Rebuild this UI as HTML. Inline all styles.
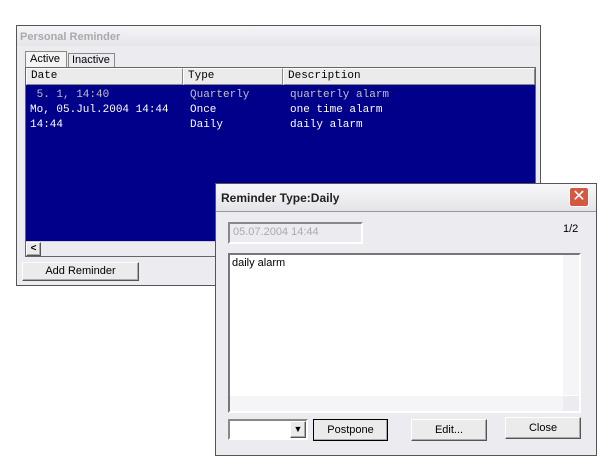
<!DOCTYPE html><html><head><style>
body{margin:0;width:610px;height:471px;background:#fff;position:relative;overflow:hidden;font-family:"Liberation Sans",sans-serif;font-size:11px}
.a{position:absolute;box-sizing:border-box}
.btn{background:#ebebeb;border:1px solid;border-color:#fff #555 #555 #fff;box-shadow:inset -1px -1px #aaa;text-align:center;line-height:18px}
.mono{font-family:"Liberation Mono",monospace;font-size:11px;color:#fff}
.hd{background:#ebebeb;border:1px solid;border-color:#fff #888 #888 #fff;font-family:"Liberation Mono",monospace;padding-left:4px;line-height:15px}
</style></head><body>
<div class="a" style="left:16px;top:25px;width:525px;height:261px;border:1px solid #555;background:#ecebf0"></div>
<div class="a" style="left:17px;top:26px;width:523px;height:20px;background:linear-gradient(#f5f5f8,#e6e6ea)"></div>
<div class="a" style="left:20px;top:31px;color:#aaa;font-weight:bold;font-size:11px">Personal Reminder</div>
<div class="a" style="left:25px;top:51px;width:42px;height:16px;border:1px solid #888;border-bottom:none;background:#f4f4f4;font-size:11px;padding:1px 4px">Active</div>
<div class="a" style="left:68px;top:53px;width:47px;height:14px;border:1px solid #888;border-bottom:none;background:#ecebf0;padding:0 3px">Inactive</div>
<div class="a" style="left:25px;top:67px;width:511px;height:190px;border:1px solid #666;background:#00008b"></div>
<div class="a hd" style="left:26px;top:68px;width:157px;height:17px">Date</div>
<div class="a hd" style="left:183px;top:68px;width:100px;height:17px">Type</div>
<div class="a hd" style="left:283px;top:68px;width:252px;height:17px">Description</div>
<div class="a mono" style="left:30px;top:88px;line-height:15px;color:#c0c0c0">&nbsp;5. 1, 14:40<br><span style="color:#fff">Mo, 05.Jul.2004 14:44<br>14:44</span></div>
<div class="a mono" style="left:190px;top:88px;line-height:15px;color:#c0c0c0">Quarterly<br><span style="color:#fff">Once<br>Daily</span></div>
<div class="a mono" style="left:290px;top:88px;line-height:15px;color:#c0c0c0">quarterly alarm<br><span style="color:#fff">one time alarm<br>daily alarm</span></div>
<div class="a" style="left:26px;top:241px;width:509px;height:15px;background:#ecebf0;border-top:1px solid #ccc"></div>
<div class="a btn" style="left:26px;top:242px;width:15px;height:14px;line-height:12px;font-size:10px;font-weight:bold">&lt;</div>
<div class="a btn" style="left:22px;top:262px;width:117px;height:19px;line-height:17px">Add Reminder</div>

<div class="a" style="left:215px;top:183px;width:382px;height:273px;border:1px solid #555;background:#ecebf0"></div>
<div class="a" style="left:216px;top:184px;width:380px;height:28px;background:linear-gradient(#f8f8fa,#e4e4e8);border-bottom:1px solid #999"></div>
<div class="a" style="left:221px;top:191px;font-weight:bold;font-size:12px;color:#222">Reminder Type:Daily</div>
<div class="a" style="left:569px;top:187px;width:20px;height:20px;border:1px solid #fff;border-radius:3px;background:#d55940;color:#fff;text-align:center;font-size:16px;line-height:18px">✕</div>
<div class="a" style="left:228px;top:222px;width:135px;height:22px;border:2px solid;border-color:#888 #fff #fff #888;background:#ecebf0;color:#aaa;padding:2px 3px;font-size:11px">05.07.2004 14:44</div>
<div class="a" style="left:563px;top:223px">1/2</div>
<div class="a" style="left:228px;top:253px;width:353px;height:160px;border:2px solid;border-color:#777 #fff #fff #777;background:#fff;padding:2px;font-size:11px">daily alarm</div>
<div class="a" style="left:563px;top:255px;width:16px;height:140px;background:#f5f5f8"></div>
<div class="a" style="left:230px;top:396px;width:333px;height:15px;background:#f5f5f8"></div>
<div class="a" style="left:563px;top:396px;width:16px;height:15px;background:#ecebf0"></div>
<div class="a" style="left:228px;top:419px;width:80px;height:21px;border:2px solid;border-color:#888 #fff #fff #888;background:#fff"></div>
<div class="a btn" style="left:290px;top:421px;width:16px;height:17px;line-height:15px;font-size:9px">▼</div>
<div class="a btn" style="left:313px;top:419px;width:75px;height:22px;border:1px solid #000;line-height:20px">Postpone</div>
<div class="a btn" style="left:411px;top:419px;width:76px;height:22px;line-height:20px">Edit...</div>
<div class="a btn" style="left:505px;top:417px;width:76px;height:22px;line-height:20px">Close</div>
</body></html>
